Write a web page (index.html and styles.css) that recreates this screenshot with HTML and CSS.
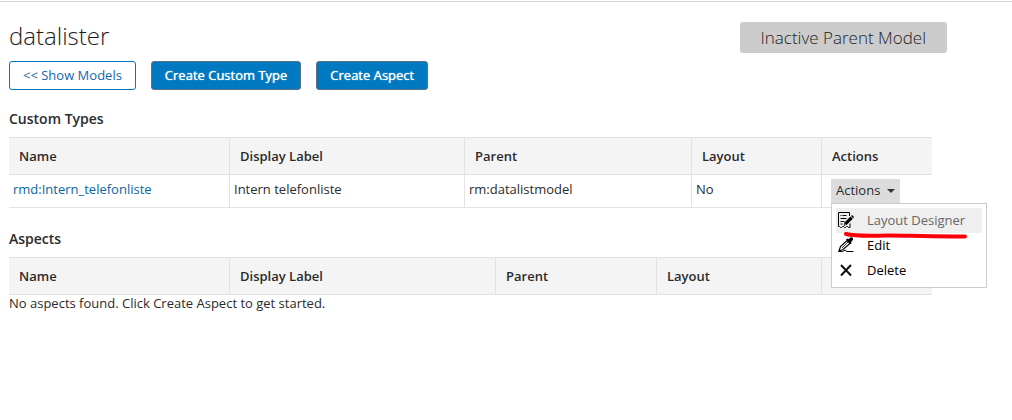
FILE: index.html
```html
<!DOCTYPE html>
<html lang="en">
<head>
<meta charset="utf-8">
<meta name="viewport" content="width=device-width, initial-scale=1">
<title>datalister</title>
<link rel="stylesheet" href="styles.css">
</head>
<body>
<main class="page">
  <header class="page-header">
    <h1 class="title">datalister</h1>
    <div class="status">Inactive Parent Model</div>
  </header>
  <div class="toolbar">
    <button type="button" class="button">&lt;&lt; Show Models</button>
    <button type="button" class="button button-primary">Create Custom Type</button>
    <button type="button" class="button button-primary">Create Aspect</button>
  </div>

  <section class="section">
    <h2 class="section-title">Custom Types</h2>
    <table class="grid">
      <colgroup>
        <col class="col-name"><col><col class="col-type-parent"><col class="col-type-layout"><col class="col-actions">
      </colgroup>
      <thead>
        <tr><th scope="col">Name</th><th scope="col">Display Label</th><th scope="col">Parent</th><th scope="col">Layout</th><th scope="col">Actions</th></tr>
      </thead>
      <tbody>
        <tr>
          <td><a class="link" href="#type">rmd:Intern_telefonliste</a></td>
          <td>Intern telefonliste</td>
          <td>rm:datalistmodel</td>
          <td>No</td>
          <td class="cell-actions">
            <div class="dropdown">
              <button type="button" class="dropdown-button" aria-haspopup="menu" aria-expanded="true">Actions<span class="caret"></span></button>
              <div class="menu" role="menu">
                <button type="button" class="menu-item menu-item-active" role="menuitem">
                  <svg class="icon" viewBox="0 0 16 16" aria-hidden="true">
                    <path d="M11.500 4V.5H.5v14h1l1 1h1l1-1h1l1 1h1l1-1h1l1 1h1.500v-4" fill="none" stroke="#000"/>
                    <path d="M2.500 3.500h1M4.500 3.500h4M2.500 6.500h6M2.500 9.500h4M2.500 12h2" stroke="#000" fill="none"/>
                    <path d="M5.500 14l1-3.500 6-6 2.300 2.200-6 6z" fill="#000"/>
                    <path d="M13 4l1-1 2 2-.8 1.200z" fill="#000"/>
                    <path d="M6.500 13l.5-1.500 1 1z" fill="#fff"/>
                  </svg>Layout Designer</button>
                <button type="button" class="menu-item" role="menuitem">
                  <svg class="icon" viewBox="0 0 16 16" aria-hidden="true">
                    <path d="M1 14l1.500-4.500L9 3.500l3 3-7 6z" fill="#fff" stroke="#000" stroke-width="1.200"/>
                    <path d="M4 11l6-6" stroke="#000" stroke-width=".8"/>
                    <path d="M8 2.500l1.500-1 1 .8L12.500.5c1.500-1 3.500 1 2.300 2.600L13 5l.7 1-1.200 1z" fill="#000"/>
                    <path d="M.5 14.500h4l3-1.500 1 1.500h7" fill="none" stroke="#000"/>
                  </svg>Edit</button>
                <button type="button" class="menu-item" role="menuitem">
                  <svg class="icon" viewBox="0 0 16 16" aria-hidden="true">
                    <path d="M3 3l10 10.500M13 3L3 13.500" stroke="#111" stroke-width="2" fill="none"/>
                  </svg>Delete</button>
                <svg class="underline" viewBox="0 0 124 8" aria-hidden="true">
                  <path d="M2 2C10 4 24 4 42 3.500S78 5 121 4.500" fill="none" stroke="#fb0007" stroke-width="4" stroke-linecap="round" stroke-linejoin="round"/>
                </svg>
              </div>
            </div>
          </td>
        </tr>
      </tbody>
    </table>
  </section>

  <section class="section">
    <h2 class="section-title">Aspects</h2>
    <table class="grid">
      <colgroup>
        <col class="col-name"><col><col class="col-aspect-parent"><col class="col-aspect-layout"><col class="col-actions">
      </colgroup>
      <thead>
        <tr><th scope="col">Name</th><th scope="col">Display Label</th><th scope="col">Parent</th><th scope="col">Layout</th><th scope="col" aria-label="Actions"></th></tr>
      </thead>
    </table>
    <p class="empty">No aspects found. Click Create Aspect to get started.</p>
  </section>
</main>
</body>
</html>
```
FILE: styles.css
```css
* {
  box-sizing: border-box;
}

body {
  margin: 0;
  padding-top: 1px;
  background: #fff;
  color: #2b2b2b;
  font: 13px/18px "Open Sans", "Noto Sans", sans-serif;
}

button {
  font: inherit;
  color: inherit;
  cursor: pointer;
}

.page {
  padding: 20px 80px 20px 9px;
  border-top: 1px solid #d3d3d3;
}

.page-header {
  display: flex;
  justify-content: space-between;
  align-items: flex-start;
  margin-right: -15px;
  color: #1c1c1c;
}

.title {
  margin: 0;
  font-size: 24px;
  line-height: 28px;
  font-weight: 300;
}

.status {
  padding: 0 21px;
  border-radius: 3px;
  background: #ccc;
  font-size: 17px;
  line-height: 31px;
  font-weight: 300;
}

.toolbar {
  display: flex;
  gap: 15px;
  margin-top: 8px;
}

.button {
  padding: 0 13px;
  border: 1px solid #0079c1;
  border-radius: 3px;
  background: #fff;
  color: #1865b0;
  line-height: 27px;
}

.button-primary {
  border-color: #5c7284;
  background: #0079c1;
  color: #fff;
  font-weight: 500;
  text-shadow: 0 0 1px #fff;
}

.section {
  margin-top: 20px;
}

.section + .section {
  margin-top: 22px;
}

.section-title {
  margin: 0 0 9px;
  font-size: 14px;
  line-height: 18px;
  font-weight: 600;
}

.grid {
  width: 100%;
  table-layout: fixed;
  border-spacing: 0;
}

.col-name {
  width: 221px;
}

.col-type-parent {
  width: 227px;
}

.col-type-layout {
  width: 130px;
}

.col-aspect-parent {
  width: 161px;
}

.col-aspect-layout {
  width: 165px;
}

.col-actions {
  width: 110px;
}

.grid th,
.grid td {
  border-right: 1px solid #e2e2e2;
  border-bottom: 1px solid #e2e2e2;
  text-align: left;
}

.grid th:last-child,
.grid td:last-child {
  border-right: 0;
}

.grid th {
  padding: 9px 10px;
  border-top: 1px solid #e2e2e2;
  background: #f4f4f4;
  font-weight: 600;
}

.grid td {
  height: 33px;
  padding: 5px 4px;
  vertical-align: top;
}

.grid .cell-actions {
  padding: 4px 9px 0;
}

.link {
  color: #0a67a3;
  text-decoration: none;
}

.dropdown {
  position: relative;
}

.dropdown-button {
  display: flex;
  align-items: center;
  gap: 7px;
  height: 24px;
  padding: 0 5px 2px;
  border: 0;
  background: #dcdcdc;
}

.caret {
  margin-top: 2px;
  border: 4px solid transparent;
  border-top-color: #333;
  border-bottom: 0;
}

.menu {
  position: absolute;
  z-index: 1;
  top: 100%;
  left: 0;
  width: 156px;
  padding: 4px;
  border: 1px solid #ccc;
  background: #fff;
}

.menu-item {
  display: flex;
  align-items: center;
  gap: 13px;
  width: 100%;
  height: 25px;
  padding: 0 2px 2px;
  border: 0;
  background: none;
  color: #000;
}

.menu-item-active {
  background: #efefef;
  color: #666;
}

.icon {
  width: 16px;
  height: 16px;
}

.underline {
  position: absolute;
  top: 28px;
  left: 12px;
  width: 124px;
  height: 8px;
  pointer-events: none;
}

.empty {
  margin: 0;
  line-height: 16px;
}
```
